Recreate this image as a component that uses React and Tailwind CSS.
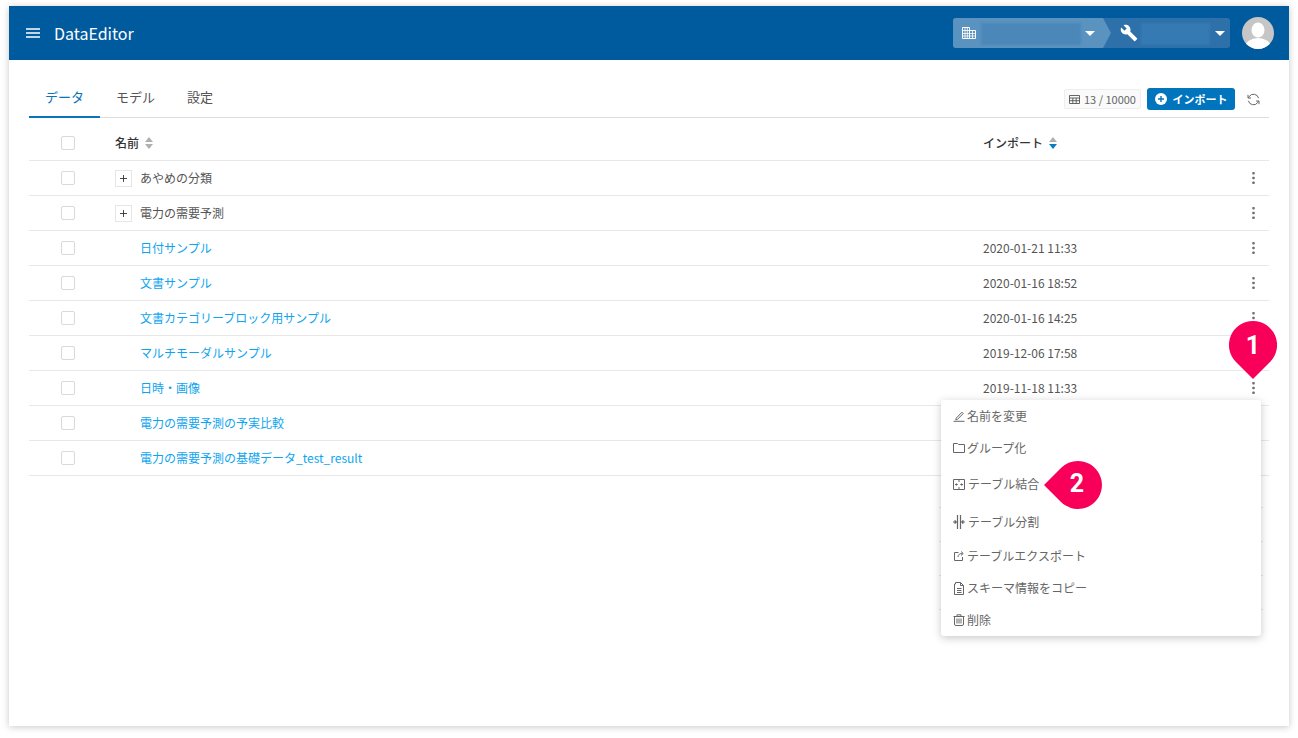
import React from "react";

const FONT = "font-['Noto_Sans_CJK_JP','Noto_Sans',sans-serif]";

const rows = [
  { name: "あやめの分類", group: true },
  { name: "電力の需要予測", group: true },
  { name: "日付サンプル", date: "2020-01-21 11:33" },
  { name: "文書サンプル", date: "2020-01-16 18:52" },
  { name: "文書カテゴリーブロック用サンプル", date: "2020-01-16 14:25" },
  { name: "マルチモーダルサンプル", date: "2019-12-06 17:58" },
  { name: "日時・画像", date: "2019-11-18 11:33" },
  { name: "電力の需要予測の予実比較", date: "" },
  { name: "電力の需要予測の基礎データ_test_result", date: "" },
];

function Check() {
  return <span className="block w-[14px] h-[14px] rounded-[2px] border border-[#d9d9d9] bg-white" />;
}

function Kebab() {
  return (
    <svg width="3" height="12" viewBox="0 0 3 12" className="block">
      <rect x="0.25" y="0" width="2.5" height="2.5" rx="0.8" fill="#707070" />
      <rect x="0.25" y="4.75" width="2.5" height="2.5" rx="0.8" fill="#707070" />
      <rect x="0.25" y="9.5" width="2.5" height="2.5" rx="0.8" fill="#707070" />
    </svg>
  );
}

function Sort({ active }) {
  return (
    <svg width="8" height="12" viewBox="0 0 8 12" className="block">
      <path d="M4 0 L8 5 L0 5 Z" fill="#b0b0b0" />
      <path d="M4 12 L8 7 L0 7 Z" fill={active ? "#0a7cc4" : "#b0b0b0"} />
    </svg>
  );
}

function Caret() {
  return (
    <svg width="10" height="5" viewBox="0 0 10 5" className="block">
      <path d="M0 0 H10 L5 5 Z" fill="#fff" />
    </svg>
  );
}

function Pin({ direction, label, className }) {
  const d =
    direction === "down"
      ? "M24 0 A24 24 0 0 1 41 41 L24 58 L7 41 A24 24 0 0 1 24 0 Z"
      : "M34 1 A24 24 0 1 1 17 42 L0 25 L17 8 A24 24 0 0 1 34 1 Z";
  const w = direction === "down" ? 48 : 58;
  const h = direction === "down" ? 58 : 50;
  return (
    <div className={"absolute " + className} style={{ width: w, height: h }}>
      <svg width={w} height={h} viewBox={`0 0 ${w} ${h}`} className="absolute inset-0">
        <path d={d} fill="#f8005a" />
      </svg>
      <span
        className={
          "absolute h-[48px] w-[48px] flex items-center justify-center text-white text-[25px] font-bold font-['Roboto',sans-serif] " +
          (direction === "down" ? "left-0 top-[1px]" : "left-[9px] top-0")
        }
      >
        {label}
      </span>
    </div>
  );
}

const ic = { fill: "none", stroke: "#666", strokeWidth: 1 };

const menu = [
  {
    h: "h-[32px]",
    label: "名前を変更",
    gap: "ml-[2px]",
    icon: (
      <svg width="12" height="12" viewBox="0 0 12 12" {...ic}>
        <path d="M3.2 8.2 L9 2.2 L10.3 3.5 L4.4 9.4 L2.8 9.8 Z" />
        <path d="M0.5 11.3 H11.5" />
      </svg>
    ),
  },
  {
    h: "h-[32px]",
    label: "グループ化",
    gap: "ml-[2px]",
    icon: (
      <svg width="12" height="12" viewBox="0 0 12 12" {...ic}>
        <path d="M0.5 1.5 H4.5 L5.5 2.5 H11.5 V10.5 H0.5 Z" />
      </svg>
    ),
  },
  {
    h: "h-[40px]",
    label: "テーブル結合",
    gap: "ml-[3px]",
    icon: (
      <svg width="12" height="11" viewBox="0 0 12 11" {...ic}>
        <path d="M0.5 0.5 H11.5 V10.5 H0.5 Z M6 0.5 V3 M6 8 V10.5" />
        <path d="M2 5.5 H4.2 M3.3 4.4 L4.4 5.5 L3.3 6.6 M10 5.5 H7.8 M8.7 4.4 L7.6 5.5 L8.7 6.6" />
      </svg>
    ),
  },
  {
    h: "h-[36px]",
    label: "テーブル分割",
    gap: "ml-[3px]",
    icon: (
      <svg width="12" height="14" viewBox="0 0 12 14" {...ic}>
        <path d="M4.5 0 V14 M7.5 0 V14" strokeWidth="1.2" />
        <path d="M0 7 H2 M10 7 H12" />
        <path d="M2 5.4 L3.6 7 L2 8.6 Z M10 5.4 L8.4 7 L10 8.6 Z" fill="#666" />
      </svg>
    ),
  },
  {
    h: "h-[32px]",
    label: "テーブルエクスポート",
    gap: "ml-[2px]",
    icon: (
      <svg width="12" height="12" viewBox="0 0 12 12" {...ic}>
        <path d="M5.5 2.5 H1.5 V10.5 H9.5 V7" />
        <path d="M5 7 C5 4.5 7 3.5 9.5 3.5 M8 1.5 L10.2 3.5 L8 5.5" />
      </svg>
    ),
  },
  {
    h: "h-[32px]",
    label: "スキーマ情報をコピー",
    gap: "ml-[2px]",
    icon: (
      <svg width="12" height="13" viewBox="0 0 12 13" {...ic}>
        <path d="M2.5 2 V0.5 H7.5 L10.5 3.5 V12.5 H1.5 V2 Z" />
        <path d="M7.5 0.5 V3.5 H10.5 M4 6.5 H8.5 M4 8.5 H8.5 M4 10.5 H8.5" />
      </svg>
    ),
  },
  {
    h: "h-[32px]",
    label: "削除",
    gap: "ml-[2px]",
    icon: (
      <svg width="12" height="12" viewBox="0 0 12 12" {...ic}>
        <path d="M0.5 2.5 H11.5 M4 2.5 V0.8 H8 V2.5 M1.5 2.5 V10 Q1.5 11.5 3 11.5 H9 Q10.5 11.5 10.5 10 V2.5" />
        <path d="M4 4.5 V9.5 M6 4.5 V9.5 M8 4.5 V9.5" />
      </svg>
    ),
  },
];

export default function App() {
  return (
    <div className={"h-[738px] w-[1298px] overflow-hidden bg-white pt-[6px] pl-[9px] text-[12px] " + FONT}>
      <div className="relative w-[1280px] h-[720px] bg-white shadow-[0_1px_7px_rgba(0,0,0,0.22)]">
        {/* Header */}
        <header className="h-[54px] bg-[#005a9e] flex items-center pl-[17px] pr-[15px] text-white">
          <svg width="14" height="10" viewBox="0 0 14 10" className="block">
            <path d="M0 1 H14 M0 5 H14 M0 9 H14" stroke="#fff" strokeWidth="1.4" />
          </svg>
          <span className="ml-[14px] text-[16px] font-['Noto_Sans_CJK_JP',sans-serif]">DataEditor</span>

          <div className="ml-auto flex items-center">
            <div className="relative h-[30px] w-[277px] rounded-[3px] bg-[#2e70aa] flex overflow-hidden">
              <div
                className="absolute left-0 top-0 h-[30px] w-[160px] bg-[#5a93c0]"
                style={{ clipPath: "polygon(0 0, 150px 0, 158px 15px, 150px 30px, 0 30px)" }}
              />
              <svg width="14" height="12" viewBox="0 0 14 12" className="absolute left-[9px] top-[9px]">
                <path d="M0.5 0.5 H7.5 V11.5 H0.5 Z M7.5 3.5 H13.5 V11.5 H7.5" fill="none" stroke="#fff" />
                <path d="M0.5 3.5 H7.5 M0.5 6.5 H13.5 M0.5 9 H13.5 M3 0.5 V11.5 M5.3 0.5 V11.5 M10.5 3.5 V11.5" stroke="#fff" strokeWidth="0.8" />
              </svg>
              <div className="absolute left-[28px] top-[5px] w-[100px] h-[22px] bg-[#4c87b9] blur-[1px]" />
              <div className="absolute left-[132px] top-[13px]">
                <Caret />
              </div>
              <svg width="18" height="18" viewBox="0 0 24 24" className="absolute left-[167px] top-[6px]">
                <path
                  fill="#fff"
                  d="M22.7 19l-9.1-9.1c.9-2.3.4-5-1.5-6.9-2-2-5-2.4-7.4-1.3L9 6 6 9 1.6 4.7C.4 7.1.9 10.1 2.9 12.1c1.9 1.9 4.6 2.4 6.9 1.5l9.1 9.1c.4.4 1 .4 1.4 0l2.3-2.3c.5-.4.5-1.1.1-1.4z"
                />
              </svg>
              <div className="absolute left-[188px] top-[5px] w-[69px] h-[22px] bg-[#357ab3] blur-[1px]" />
              <div className="absolute left-[262px] top-[13px]">
                <Caret />
              </div>
            </div>
            <svg width="32" height="32" viewBox="0 0 32 32" className="ml-[12px] block">
              <defs>
                <clipPath id="av">
                  <circle cx="16" cy="16" r="16" />
                </clipPath>
              </defs>
              <g clipPath="url(#av)">
                <rect width="32" height="32" fill="#c6c6c6" />
                <ellipse cx="16" cy="13" rx="6.5" ry="7.5" fill="#fff" />
                <ellipse cx="16" cy="30" rx="13" ry="9" fill="#fff" />
              </g>
            </svg>
          </div>
        </header>

        <main className="px-[20px] pt-[20px]">
          {/* Tabs */}
          <div className="h-[38px] border-b border-[#dcdcdc] flex items-start text-[13px]">
            <div className="h-[38px] px-4 pt-[7px] border-b-2 border-[#0a74ba] text-[#0a74ba]">データ</div>
            <div className="h-[37px] px-4 pt-[7px] text-[#555]">モデル</div>
            <div className="h-[37px] px-4 pt-[7px] text-[#555]">設定</div>
            <div className="ml-auto flex items-center pt-[8px]">
              <div className="h-[20px] w-[77px] rounded-[2px] border border-[#eeeeee] bg-[#fafafa] flex items-center justify-center gap-[4px] text-[11px] text-[#666]">
                <svg width="11" height="9" viewBox="0 0 11 9" className="block">
                  <path d="M0.5 0.5 H10.5 V8.5 H0.5 Z M0.5 3 H10.5 M0.5 5.7 H10.5 M3.8 3 V8.5 M7.2 3 V8.5" fill="none" stroke="#555" strokeWidth="0.9" />
                </svg>
                <span>13 / 10000</span>
              </div>
              <div className="ml-[6px] h-[22px] w-[88px] rounded-[3px] bg-[#0074bd] flex items-center justify-center gap-[6px] text-white text-[11px] font-bold">
                <svg width="12" height="12" viewBox="0 0 12 12" className="block">
                  <circle cx="6" cy="6" r="6" fill="#fff" />
                  <path d="M6 3 V9 M3 6 H9" stroke="#0074bd" strokeWidth="1.4" />
                </svg>
                <span>インポート</span>
              </div>
              <svg width="13" height="13" viewBox="0 0 13 13" className="ml-[12px] mr-[9px] block" fill="none" stroke="#666" strokeWidth="1">
                <path d="M11.6 5.2 A5.2 5.2 0 0 0 2.3 3.4 L1.3 4.8 M1.4 7.8 A5.2 5.2 0 0 0 10.7 9.6 L11.7 8.2" />
                <path d="M1 1.8 V5 H4 M12 11.2 V8 H9" />
              </svg>
            </div>
          </div>

          {/* Table header */}
          <div className="h-[43px] pt-[7px] border-b border-[#e8e8e8] flex items-center font-medium text-[#333]">
            <div className="w-[78px] flex justify-center pr-[1px]">
              <Check />
            </div>
            <div className="w-[8px]" />
            <div className="w-[868px] flex items-center gap-[6px]">
              <span>名前</span>
              <Sort />
            </div>
            <div className="flex items-center gap-[6px]">
              <span>インポート</span>
              <Sort active />
            </div>
          </div>

          {/* Rows */}
          {rows.map((r) => (
            <div key={r.name} className="h-[35px] border-b border-[#e8e8e8] flex items-center">
              <div className="w-[78px] flex justify-center pr-[1px]">
                <Check />
              </div>
              <div className="w-[8px]" />
              <div className="w-[868px] flex items-center">
                {r.group ? (
                  <>
                    <span className="w-[17px] h-[17px] border border-[#e6e6e6] flex items-center justify-center">
                      <svg width="7" height="7" viewBox="0 0 7 7" className="block">
                        <path d="M3.5 0 V7 M0 3.5 H7" stroke="#333" strokeWidth="0.9" />
                      </svg>
                    </span>
                    <span className="ml-[8px] text-[#555]">{r.name}</span>
                  </>
                ) : (
                  <span className="ml-[25px] text-[#0ea5f0]">{r.name}</span>
                )}
              </div>
              <div className="w-[269px] text-[#555]">{r.date}</div>
              <Kebab />
            </div>
          ))}
        </main>

        {/* Ghost lines peeking out around the menu */}
        {[501, 535, 569, 603].map((y) => (
          <React.Fragment key={y}>
            <div className="absolute left-[930px] w-[2px] h-px bg-[#e8e8e8]" style={{ top: y }} />
            <div className="absolute left-[1252px] w-[2px] h-px bg-[#e8e8e8]" style={{ top: y }} />
          </React.Fragment>
        ))}

        {/* Context menu */}
        <div className="absolute left-[932px] top-[394px] w-[320px] h-[236px] bg-white rounded-[3px] shadow-[0_2px_8px_rgba(0,0,0,0.22)] text-[#666]">
          {menu.map((m) => (
            <div key={m.label} className={m.h + " flex items-center pl-[12px]"}>
              <span className="w-[12px] flex items-center justify-center">{m.icon}</span>
              <span className={m.gap}>{m.label}</span>
            </div>
          ))}
        </div>

        <Pin direction="down" label="1" className="left-[1220px] top-[315px]" />
        <Pin direction="left" label="2" className="left-[1035px] top-[454px]" />
      </div>
    </div>
  );
}
